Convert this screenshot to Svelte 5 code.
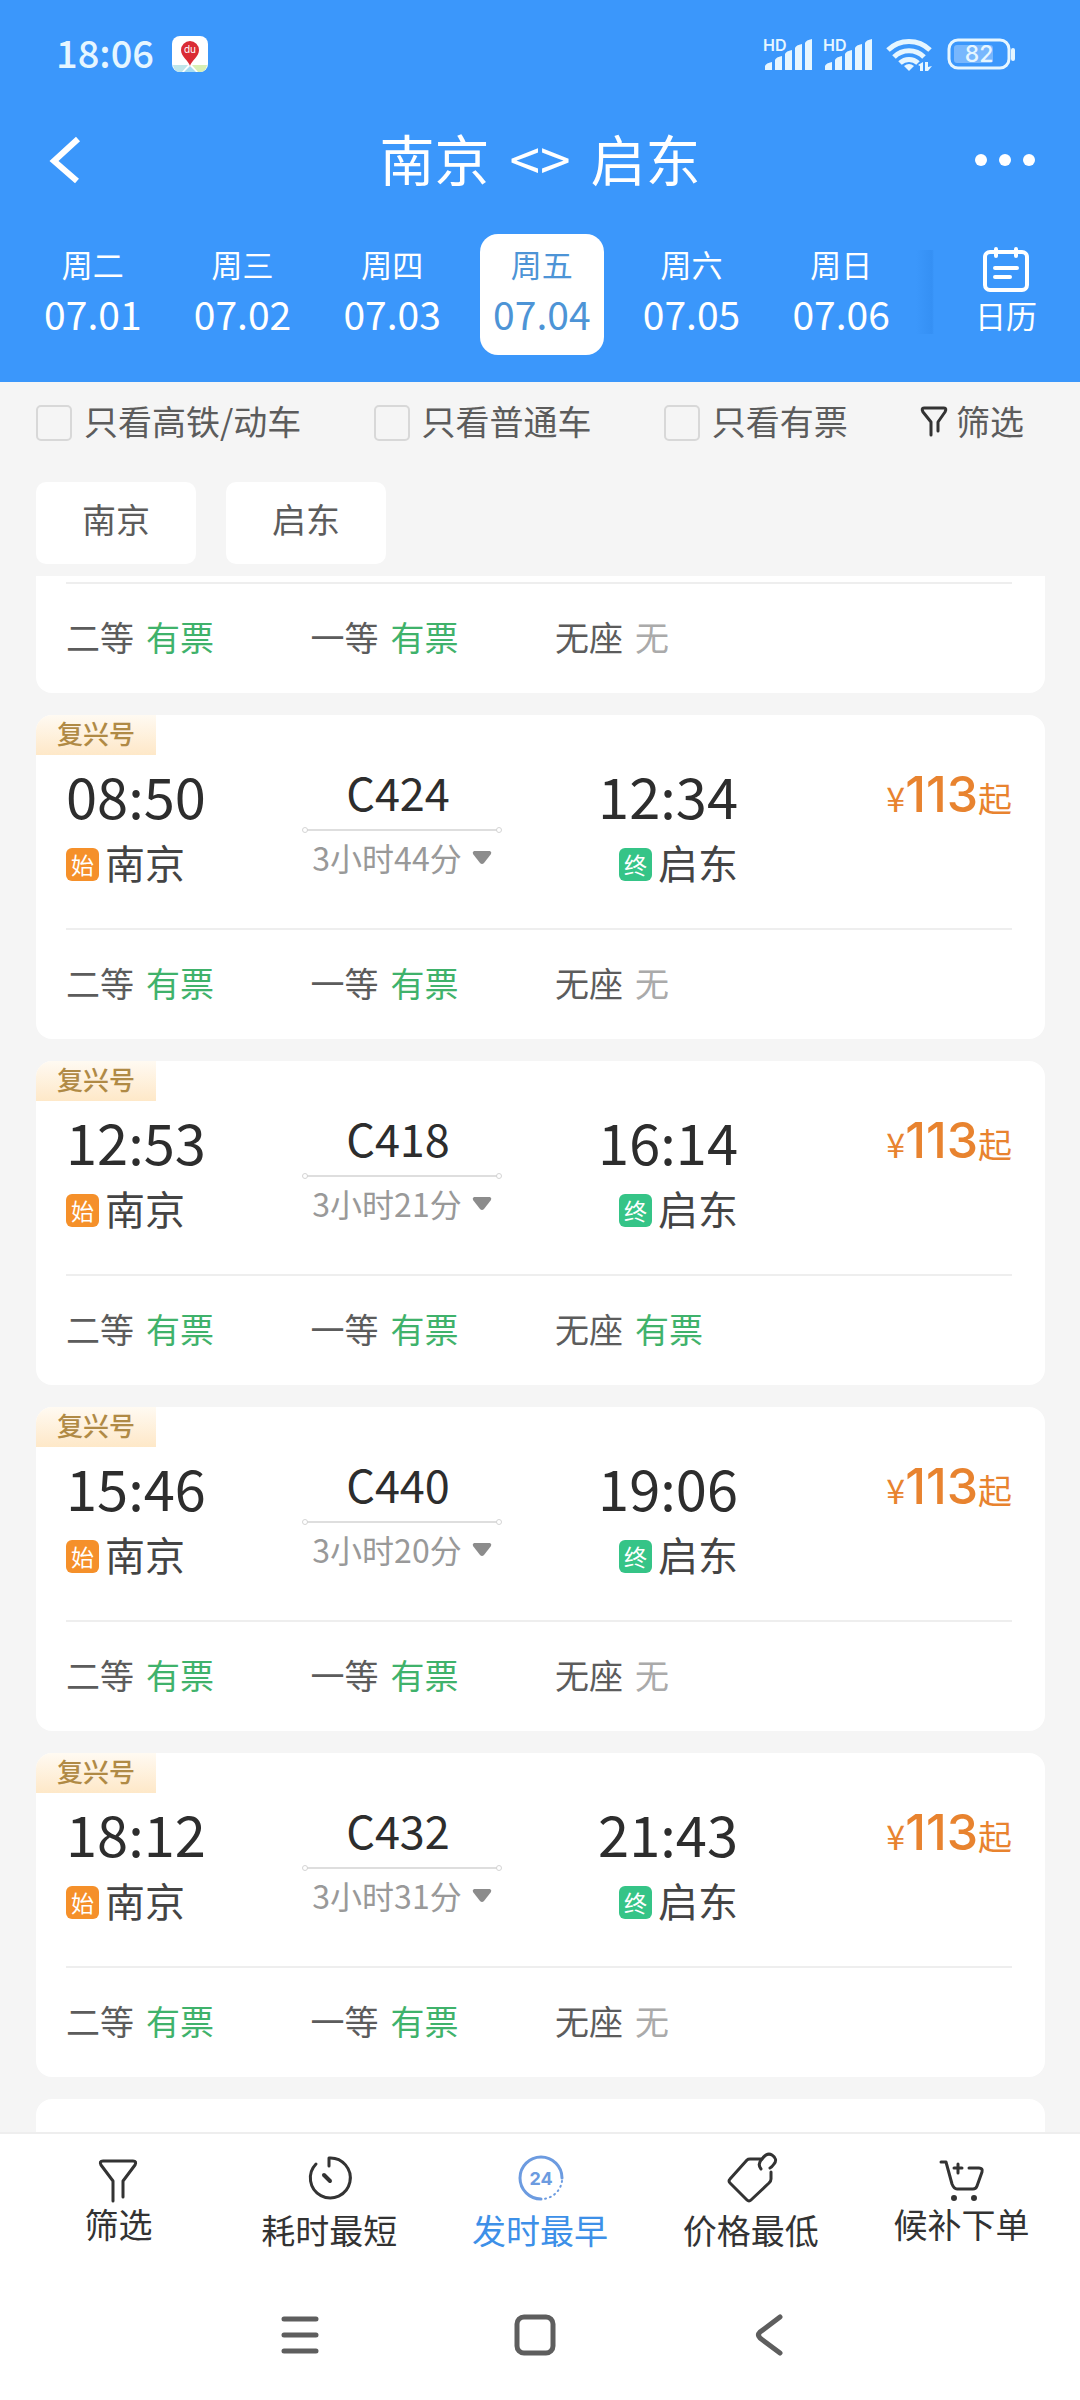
<script lang="ts">
  type Seat = { name: string; left: string };

  type Train = {
    code: string;
    depart: string;
    arrive: string;
    duration: string;
    price: number;
    seats: Seat[];
  };

  const from = '南京';
  const to = '启东';

  const days = [
    { week: '周二', date: '07.01' },
    { week: '周三', date: '07.02' },
    { week: '周四', date: '07.03' },
    { week: '周五', date: '07.04' },
    { week: '周六', date: '07.05' },
    { week: '周日', date: '07.06' }
  ];

  const filters = ['只看高铁/动车', '只看普通车', '只看有票'];

  function seats(noSeat: string): Seat[] {
    return [
      { name: '二等', left: '有票' },
      { name: '一等', left: '有票' },
      { name: '无座', left: noSeat }
    ];
  }

  const trains: Train[] = [
    { code: 'C424', depart: '08:50', arrive: '12:34', duration: '3小时44分', price: 113, seats: seats('无') },
    { code: 'C418', depart: '12:53', arrive: '16:14', duration: '3小时21分', price: 113, seats: seats('有票') },
    { code: 'C440', depart: '15:46', arrive: '19:06', duration: '3小时20分', price: 113, seats: seats('无') },
    { code: 'C432', depart: '18:12', arrive: '21:43', duration: '3小时31分', price: 113, seats: seats('无') }
  ];

  const tabs = [
    { id: 'filter', label: '筛选' },
    { id: 'fastest', label: '耗时最短' },
    { id: 'earliest', label: '发时最早' },
    { id: 'cheapest', label: '价格最低' },
    { id: 'waitlist', label: '候补下单' }
  ];

  let activeDay = $state('07.04');
  let activeTab = $state('earliest');
</script>

{#snippet signal()}
  <svg class="signal" width="51" height="40" viewBox="0 0 51 40" fill="currentColor">
    <text x="0" y="17" font-size="16" font-weight="600">HD</text>
    <path d="M2 36v-4q1-3 7-4v8zM12 36V26q1-3 7-4v14zM22 36V20q1-3 7-4v20zM32 36V14q1-3 7-4v26zM42 36V9q1-3 7-4v31z" />
  </svg>
{/snippet}

{#snippet seatRow(list: Seat[])}
  <ul class="seats">
    {#each list as seat}
      <li>
        <span>{seat.name}</span>
        <span class="left" class:none={seat.left === '无'}>{seat.left}</span>
      </li>
    {/each}
  </ul>
{/snippet}

<div class="app">
  <header>
    <div class="status">
      <span class="clock">18:06</span>
      <svg width="36" height="36" viewBox="0 0 36 36">
        <rect width="36" height="36" rx="8" fill="#fff" />
        <path d="M1 29h15l-6 7H7q-5-1-6-7z" fill="#bfe6ea" />
        <path d="M12 36l6-6 6 6z" fill="#a5dcf2" />
        <path d="M20 29h15q-1 6-6 7h-3z" fill="#d8efb4" />
        <path d="M18 30c-1-5-9-9-9-16a9 9 0 0 1 18 0c0 7-8 11-9 16z" fill="#da2c35" />
        <text x="18" y="17" font-size="10" text-anchor="middle" fill="#fff">du</text>
      </svg>
      <div class="status-icons">
        {@render signal()}
        {@render signal()}
        <svg class="wifi" width="48" height="36" viewBox="0 0 48 36" fill="none" stroke="currentColor" stroke-width="5">
          <path d="M2 14a30 30 0 0 1 42 0" />
          <path d="M8 21a21 21 0 0 1 30 0" />
          <path d="M14 27a13 13 0 0 1 18 0" />
          <path d="M18 30q5-4 10 0l-5 5z" fill="currentColor" stroke="none" />
          <path d="M32 29l5-3v9h-3v-5zM39 26h3v5l4-1-4 5h-3z" fill="currentColor" stroke="none" />
        </svg>
        <svg width="70" height="32" viewBox="0 0 70 32">
          <rect x="2" y="2" width="60" height="28" rx="9" fill="none" stroke="currentColor" stroke-width="3" />
          <rect x="7" y="7" width="39" height="18" rx="3" fill="#78b7fd" />
          <path d="M66 12v9" stroke="currentColor" stroke-width="4" stroke-linecap="round" />
          <text x="32" y="24" font-size="23" font-weight="500" text-anchor="middle" fill="currentColor">82</text>
        </svg>
      </div>
    </div>

    <div class="title-bar">
      <button aria-label="返回">
        <svg width="30" height="44" viewBox="0 0 30 44" fill="none" stroke="currentColor" stroke-width="6">
          <path d="M28 1L4 23l23 20" />
        </svg>
      </button>
      <h1><span>{from}</span><span>&lt;&gt;</span><span>{to}</span></h1>
      <button aria-label="更多">
        <svg width="62" height="14" viewBox="0 0 62 14" fill="currentColor">
          <circle cx="7" cy="7" r="6" />
          <circle cx="31" cy="7" r="6" />
          <circle cx="55" cy="7" r="6" />
        </svg>
      </button>
    </div>

    <div class="date-bar">
      <div class="days">
        {#each days as day}
          <button class="day" class:active={activeDay === day.date} onclick={() => (activeDay = day.date)}>
            <span class="week">{day.week}</span>
            <span class="date">{day.date}</span>
          </button>
        {/each}
      </div>
      <button class="calendar">
        <svg width="46" height="46" viewBox="0 0 46 46" fill="none" stroke="currentColor" stroke-width="4" stroke-linecap="round">
          <rect x="2" y="5" width="42" height="38" rx="5" />
          <path d="M13 2v7M33 2v7M12 21h22M12 30h15" />
        </svg>
        <span>日历</span>
      </button>
    </div>
  </header>

  <div class="filters">
    {#each filters as filter}
      <label><input type="checkbox" />{filter}</label>
    {/each}
    <button class="filter-button">
      <svg width="28" height="30" viewBox="0 0 28 30" fill="none" stroke="#333" stroke-width="3" stroke-linecap="round" stroke-linejoin="round">
        <path d="M11 29V16L3 6Q1 2 4 2h20q3 0 1 4l-7 10v9" />
      </svg>
      筛选
    </button>
  </div>

  <div class="stations">
    <button>{from}</button>
    <button>{to}</button>
  </div>

  <main>
    <section class="card clipped">
      {@render seatRow(seats('无'))}
    </section>

    {#each trains as train}
      <section class="card">
        <div class="tag">复兴号</div>
        <div class="trip">
          <div class="depart">
            <div class="time">{train.depart}</div>
            <div class="station"><i class="mark start">始</i>{from}</div>
          </div>
          <div class="route">
            <div class="code">{train.code}</div>
            <div class="track"></div>
            <button class="duration">
              {train.duration}
              <svg width="20" height="13" viewBox="0 0 20 13" fill="#8c8c8c"><path d="M2 0h16q2 1 1 3l-7 9q-2 2-4 0L1 3Q0 1 2 0z" /></svg>
            </button>
          </div>
          <div class="arrive">
            <div class="time">{train.arrive}</div>
            <div class="station"><i class="mark end">终</i>{to}</div>
          </div>
          <div class="price">¥<strong>{train.price}</strong>起</div>
        </div>
        {@render seatRow(train.seats)}
      </section>
    {/each}

    <section class="card next"></section>
  </main>

  <nav class="tabs">
    {#each tabs as tab}
      <button class="tab {tab.id}" class:active={activeTab === tab.id} onclick={() => (activeTab = tab.id)}>
        <svg width="52" height="52" viewBox="0 0 52 52" fill="none" stroke="currentColor" stroke-width="3" stroke-linecap="round" stroke-linejoin="round">
          {#if tab.id === 'filter'}
            <path d="M21 49V29L9 13Q7 9 11 9h30q4 0 2 4L31 29v16" />
          {:else if tab.id === 'fastest'}
            <path d="M26 14V6a20 20 0 1 1-13 6" />
            <path d="M21 23l6 6" stroke-width="4" />
          {:else if tab.id === 'earliest'}
            <g stroke="#6c9be0">
              <path d="M27 47A21 21 0 1 1 48 26" />
              <path d="M48 29A21 21 0 0 1 29 47" stroke-width="2" stroke-dasharray="1 4" />
            </g>
            <text x="27" y="33" font-size="18" font-weight="700" text-anchor="middle" fill="#6c9be0" stroke="none">24</text>
          {:else if tab.id === 'cheapest'}
            <path d="M37 7H25q-2 0-3 1L5 27q-2 2 0 4l17 17q2 2 4 0l18-17q2-2 2-4v-7" />
            <path d="M36 17q-4-5 1-10 5-7 10-4 6 4 2 9-2 3-4 4" />
          {:else}
            <path d="M5 10h5l6 22q2 5 5 5h16q3 0 4-3l5-14q1-4-3-4H33M18 16h8M22 12v9" />
            <circle cx="18" cy="46" r="1.500" />
            <circle cx="38" cy="46" r="1.500" />
          {/if}
        </svg>
        <span>{tab.label}</span>
      </button>
    {/each}
  </nav>

  <div class="system-nav">
    <button aria-label="最近任务">
      <svg width="42" height="42" viewBox="0 0 42 42" fill="none" stroke="currentColor" stroke-width="5" stroke-linecap="round">
        <path d="M5 5h32M5 21h32M5 37h32" />
      </svg>
    </button>
    <button aria-label="主屏幕">
      <svg width="42" height="42" viewBox="0 0 42 42" fill="none" stroke="currentColor" stroke-width="5">
        <rect x="3" y="3" width="36" height="36" rx="7" />
      </svg>
    </button>
    <button aria-label="返回">
      <svg width="42" height="42" viewBox="0 0 42 42" fill="none" stroke="currentColor" stroke-width="5" stroke-linecap="round" stroke-linejoin="round">
        <path d="M31 3L11 18q-3 3 0 6l20 15" />
      </svg>
    </button>
  </div>
</div>

<style>
  :global(body) {
    margin: 0;
    background: #f5f5f5;
  }
  .app {
    height: 100vh;
    display: flex;
    flex-direction: column;
    overflow: hidden;
    font-family: 'Noto Sans CJK SC', sans-serif;
    font-size: 34px;
    line-height: 40px;
    color: #5c5c5c;
  }
  button {
    padding: 0;
    border: 0;
    background: none;
    font: inherit;
    color: inherit;
    cursor: pointer;
  }
  svg {
    display: block;
    flex: none;
    overflow: visible;
  }
  svg text {
    font-family: Inter, sans-serif;
  }
  header {
    padding-bottom: 27px;
    background: #3b97fb;
    color: #fff;
  }

  .status {
    display: flex;
    align-items: center;
    height: 108px;
    padding: 0 63px 0 56px;
    color: #e6f6ff;
  }
  .clock {
    margin-right: 18px;
    padding-bottom: 4px;
    font-size: 38px;
    font-weight: 500;
    line-height: 48px;
  }
  .status-icons {
    display: flex;
    align-items: center;
    margin-left: auto;
  }
  .signal {
    margin-right: 9px;
  }
  .wifi {
    margin: 0 13px 0 3px;
  }

  .title-bar {
    display: flex;
    align-items: center;
    justify-content: space-between;
    height: 104px;
    padding: 0 44px 0 50px;
  }
  .title-bar button {
    display: flex;
    align-items: center;
    width: 62px;
    height: 62px;
  }
  h1 {
    display: flex;
    gap: 20px;
    margin: 0;
    padding: 0 6px 6px 0;
    font-size: 55px;
    font-weight: 400;
    line-height: 64px;
  }

  .date-bar {
    display: flex;
    margin-top: 22px;
    padding-left: 18px;
    font-size: 31px;
  }
  .days {
    flex: 1;
    display: grid;
    grid-template-columns: repeat(6, 1fr);
    justify-items: center;
  }
  .day {
    display: flex;
    flex-direction: column;
    align-items: center;
    gap: 2px;
    width: 124px;
    padding: 10px 0 15px;
    border-radius: 18px;
  }
  .day.active {
    background: #fff;
    color: #4d94d6;
  }
  .date {
    font-size: 39px;
    line-height: 54px;
  }
  .calendar {
    display: flex;
    flex-direction: column;
    align-items: center;
    gap: 2px;
    width: 164px;
    padding: 13px 0 0 16px;
    background: linear-gradient(90deg, transparent, #3590f4 16px, transparent 18px) no-repeat 0 16px / 20px 84px;
  }

  .filters {
    display: flex;
    align-items: center;
    justify-content: space-between;
    height: 78px;
    padding: 0 56px 0 36px;
  }
  label {
    display: flex;
    align-items: center;
    gap: 12px;
  }
  input {
    appearance: none;
    width: 36px;
    height: 36px;
    margin: 4px 0 0;
    border: 2px solid #d8d8d8;
    border-radius: 5px;
  }
  .filter-button {
    display: flex;
    align-items: center;
    gap: 8px;
  }

  .stations {
    display: flex;
    gap: 30px;
    padding: 22px 36px 12px;
  }
  .stations button {
    padding: 17px 46px 25px;
    border-radius: 10px;
    background: #fff;
  }

  main {
    flex: 1;
    min-height: 0;
    overflow: hidden;
    display: flex;
    flex-direction: column;
    gap: 22px;
    padding: 0 35px 0 36px;
  }
  .card {
    flex: none;
    padding: 0 33px 0 30px;
    border-radius: 16px;
    background: #fff;
    overflow: hidden;
  }
  .card.clipped {
    padding-top: 6px;
    border-radius: 0 0 16px 16px;
  }
  .card.next {
    height: 324px;
  }
  .tag {
    width: 120px;
    margin-left: -30px;
    padding-bottom: 4px;
    background: linear-gradient(#fffaf2, #fee8c8);
    color: #b08a45;
    font-size: 26px;
    font-weight: 500;
    line-height: 36px;
    text-align: center;
  }
  .trip {
    display: grid;
    grid-template-columns: 1fr 200px 1fr 274px;
    padding: 6px 0 42px;
  }
  .time {
    color: #2d2d2d;
    font-size: 56px;
    line-height: 68px;
  }
  .station {
    display: flex;
    align-items: center;
    gap: 6px;
    margin-top: 9px;
    color: #444;
    font-size: 40px;
    line-height: 48px;
  }
  .arrive {
    text-align: right;
  }
  .arrive .station {
    justify-content: flex-end;
  }
  .mark {
    width: 33px;
    margin-top: 4px;
    border-radius: 6px;
    color: #fff;
    font-size: 23px;
    font-style: normal;
    line-height: 33px;
    text-align: center;
  }
  .start {
    background: #f5902a;
  }
  .end {
    background: #35c487;
  }
  .route {
    display: flex;
    flex-direction: column;
    align-items: center;
  }
  .code {
    padding-right: 8px;
    color: #2d2d2d;
    font-size: 45px;
    line-height: 62px;
  }
  .track {
    display: flex;
    align-items: center;
    justify-content: space-between;
    width: 100%;
    height: 14px;
    background: linear-gradient(#dedede, #dedede) no-repeat center / 190px 2px;
  }
  .track::before,
  .track::after {
    content: '';
    width: 4px;
    height: 4px;
    border: 1px solid #d4d4d4;
    border-radius: 50%;
  }
  .duration {
    display: flex;
    align-items: center;
    gap: 10px;
    color: #999;
    font-size: 32px;
  }
  .price {
    color: #e8832f;
    line-height: 66px;
    text-align: right;
  }
  .price strong {
    font-family: Inter, sans-serif;
    font-size: 50px;
    font-weight: 500;
  }

  .seats {
    display: grid;
    grid-template-columns: repeat(4, 1fr);
    gap: 32px;
    margin: 0;
    padding: 33px 0 36px;
    border-top: 2px solid #eee;
    list-style: none;
  }
  .seats li {
    display: flex;
    gap: 12px;
    white-space: nowrap;
  }
  .left {
    color: #3fb26b;
  }
  .left.none {
    color: #aaa;
  }

  .tabs {
    display: grid;
    grid-template-columns: repeat(5, 1fr);
    padding: 18px 13px 20px;
    border-top: 2px solid #eee;
    background: #fff;
    color: #333;
  }
  .tab {
    display: flex;
    flex-direction: column;
    align-items: center;
    gap: 6px;
  }
  .tab.filter,
  .tab.waitlist {
    gap: 0;
  }
  .tab.active {
    color: #3d90e8;
  }

  .system-nav {
    display: flex;
    justify-content: center;
    height: 130px;
    padding-right: 10px;
    background: #fff;
    color: #5e5e5e;
  }
  .system-nav button {
    display: flex;
    align-items: center;
    justify-content: center;
    width: 235px;
  }
</style>
